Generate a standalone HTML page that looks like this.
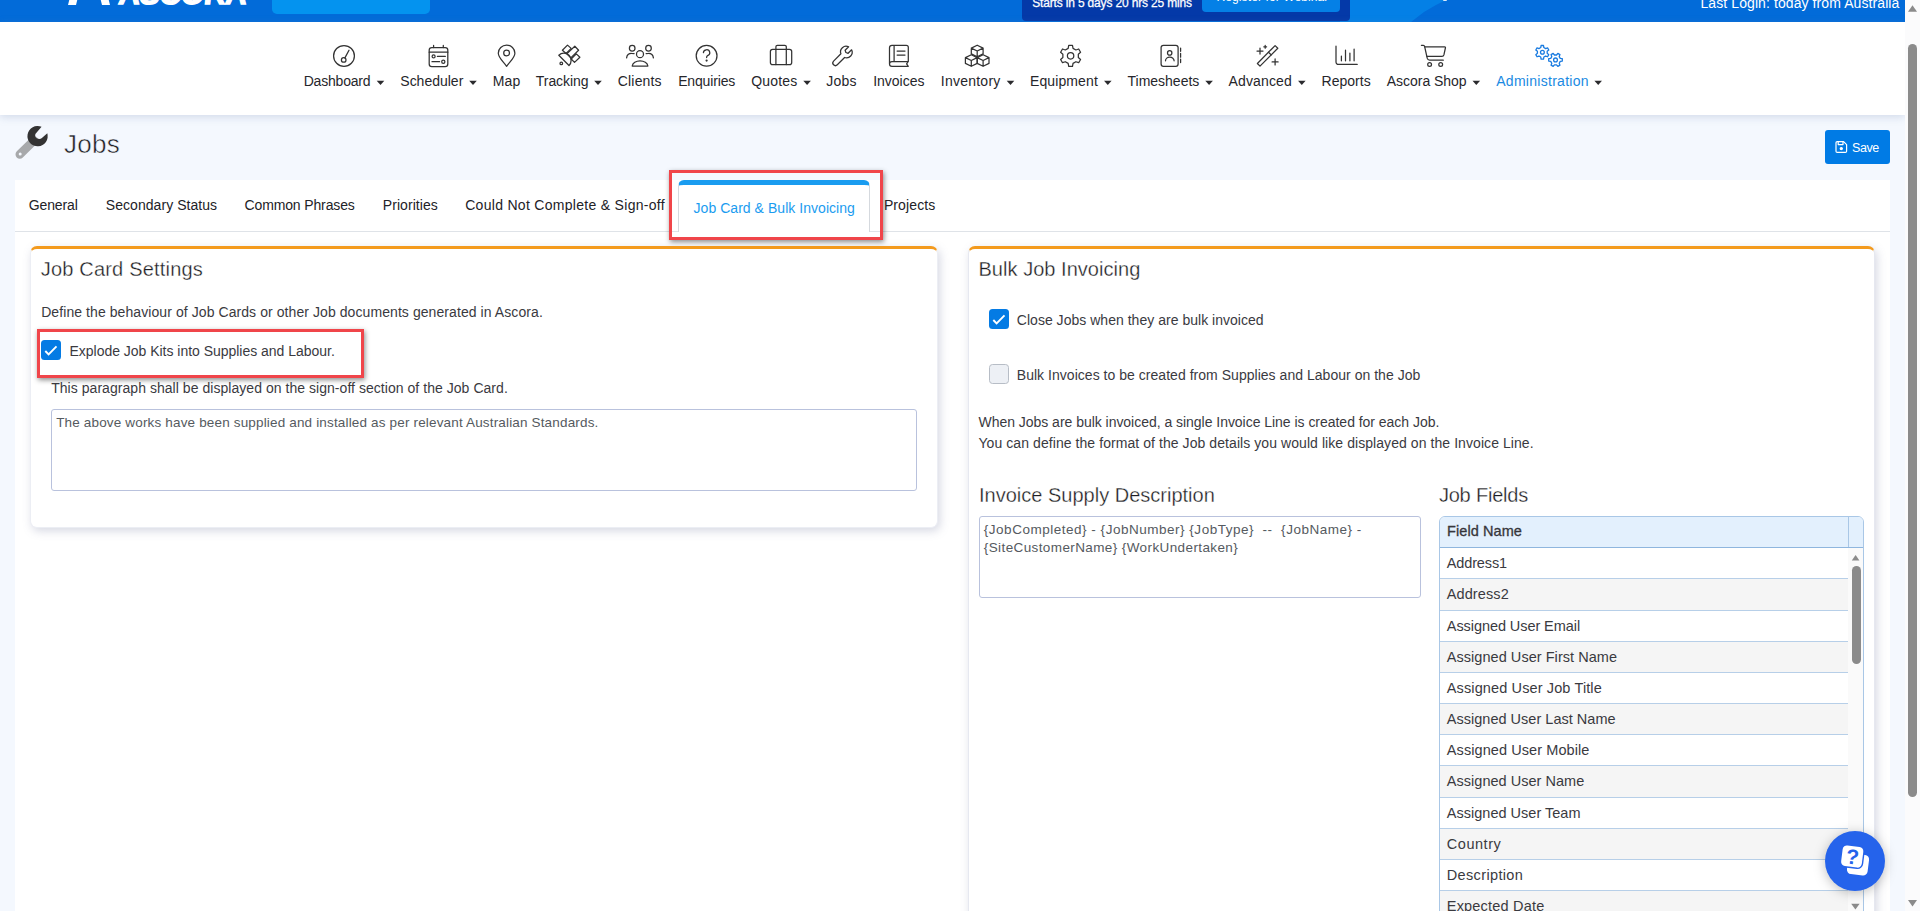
<!DOCTYPE html>
<html lang="en"><head><meta charset="utf-8"><title>Ascora - Jobs Administration</title>
<style>
html,body{margin:0;padding:0;}
body{width:1920px;height:911px;overflow:hidden;position:relative;background:#f4f8fe;font-family:"Liberation Sans",sans-serif;}
.t{position:absolute;white-space:pre;line-height:normal;font-family:"Liberation Sans",sans-serif;}
.b{position:absolute;box-sizing:border-box;}
svg{position:absolute;overflow:visible;}
.ic{fill:none;stroke:#333;stroke-width:1.25;stroke-linecap:round;stroke-linejoin:round;}

</style></head>
<body>
<!-- top blue bar -->
<div class="b" style="left:0;top:0;width:1905px;height:22px;background:#026bd9;overflow:hidden;">
  <div class="b" style="left:1340px;top:0;width:110px;height:22px;background:#0480e6;clip-path:polygon(0 0,106px 0,96px 5px,84px 12px,71px 22px,0 22px);"></div>
  <div class="b" style="left:272px;top:-10px;width:158px;height:24px;border-radius:5px;background:#0493ef;"></div>
  <div class="b" style="left:1022px;top:-10px;width:328px;height:31px;border-radius:0 0 4px 4px;background:#0439a8;"></div>
  <div class="b" style="left:1202px;top:-10px;width:138px;height:22px;border-radius:4px;background:#0480e6;"></div>
</div>
<span class="t" style="left:116.5px;top:-22.6px;font-size:30px;font-weight:700;color:#fff;letter-spacing:-0.3px;-webkit-text-stroke:1.3px #fff;transform:skewX(-6deg);transform-origin:0 100%;">ASCORA</span>
<div class="b" style="left:69px;top:-3.5px;width:8px;height:8px;background:#fff;transform:skewX(-14deg);"></div>
<div class="b" style="left:101px;top:-3.5px;width:8px;height:8px;background:#fff;transform:skewX(14deg);"></div>
<div class="b" style="left:1443px;top:-1px;width:4px;height:2.4px;border-radius:1px;background:#fff;opacity:.85;"></div>
<!-- nav -->
<div class="b" style="left:0;top:22px;width:1905px;height:93px;background:#fff;box-shadow:0 2px 8px rgba(120,140,180,.28);"></div>
<!-- tabs container -->
<div class="b" style="left:15px;top:180px;width:1875px;height:740px;background:#fff;"></div>
<div class="b" style="left:15px;top:231px;width:1875px;height:1px;background:#dfe3e8;"></div>
<!-- active tab -->
<div class="b" style="left:678px;top:180px;width:192px;height:52px;background:#fff;border:1px solid #d5d9de;border-top:5px solid #1a9cf0;border-bottom:none;border-radius:6px 6px 0 0;"></div>
<!-- red highlight tab -->
<div class="b" style="left:669px;top:170px;width:214px;height:70px;border:3px solid #f0454a;box-shadow:1px 2px 5px rgba(0,0,0,.45);"></div>
<!-- save button -->
<div class="b" style="left:1825px;top:130px;width:65px;height:34px;border-radius:3px;background:#007be5;"></div>
<!-- left panel -->
<div class="b" style="left:30px;top:246px;width:908px;height:281.5px;background:#fff;border-radius:7px;border:1px solid #eceef4;border-top:3px solid #f39a1d;box-shadow:2px 3px 10px rgba(105,112,150,.27);"></div>
<div class="b" style="left:51px;top:409px;width:866px;height:82px;background:#fff;border:1px solid #b9c2dd;border-radius:3px;"></div>
<!-- red highlight checkbox -->
<div class="b" style="left:37px;top:329px;width:327px;height:49px;border:3px solid #f0454a;box-shadow:1px 2px 5px rgba(0,0,0,.45);"></div>
<!-- right panel -->
<div class="b" style="left:968px;top:246px;width:907px;height:700px;background:#fff;border-radius:7px;border:1px solid #e6e8f0;border-top:3px solid #f39a1d;box-shadow:2px 3px 10px rgba(105,112,150,.27);"></div>
<div class="b" style="left:979px;top:516px;width:442px;height:82px;background:#fff;border:1px solid #b9c2dd;border-radius:3px;"></div>
<!-- checkboxes -->
<div class="b cb" style="left:41px;top:340px;width:20px;height:20px;border-radius:3.5px;background:#047be4;"></div>
<div class="b cb" style="left:989px;top:309px;width:20px;height:20px;border-radius:3.5px;background:#047be4;"></div>
<div class="b" style="left:989px;top:364px;width:20px;height:20px;border-radius:3.5px;background:#edf0f5;border:1px solid #b7bdc6;"></div>
<!-- table -->
<div class="b" style="left:1439px;top:516px;width:425px;height:420px;border:1px solid #a9c7e6;border-radius:6px 6px 0 0;background:#fafafa;overflow:hidden;">
  <div class="b" style="left:0;top:0;width:423px;height:30px;background:#e3f0fd;"></div>
  <div class="b" style="left:0;top:30px;width:423px;height:1px;background:#8fb6de;"></div>
  <div class="b" style="left:408px;top:0;width:1px;height:30px;background:#a9c7e6;"></div>
  <div class="b" style="left:0;top:31px;width:408px;height:30px;background:#fff;"></div>
  <div class="b" style="left:0;top:61px;width:408px;height:1px;background:#b7cfe8;"></div>
  <div class="b" style="left:0;top:62px;width:408px;height:31px;background:#f5f5f5;"></div>
  <div class="b" style="left:0;top:93px;width:408px;height:1px;background:#b7cfe8;"></div>
  <div class="b" style="left:0;top:94px;width:408px;height:30px;background:#fff;"></div>
  <div class="b" style="left:0;top:124px;width:408px;height:1px;background:#b7cfe8;"></div>
  <div class="b" style="left:0;top:125px;width:408px;height:30px;background:#f5f5f5;"></div>
  <div class="b" style="left:0;top:155px;width:408px;height:1px;background:#b7cfe8;"></div>
  <div class="b" style="left:0;top:156px;width:408px;height:30px;background:#fff;"></div>
  <div class="b" style="left:0;top:186px;width:408px;height:1px;background:#b7cfe8;"></div>
  <div class="b" style="left:0;top:187px;width:408px;height:30px;background:#f5f5f5;"></div>
  <div class="b" style="left:0;top:217px;width:408px;height:1px;background:#b7cfe8;"></div>
  <div class="b" style="left:0;top:218px;width:408px;height:30px;background:#fff;"></div>
  <div class="b" style="left:0;top:248px;width:408px;height:1px;background:#b7cfe8;"></div>
  <div class="b" style="left:0;top:249px;width:408px;height:31px;background:#f5f5f5;"></div>
  <div class="b" style="left:0;top:280px;width:408px;height:1px;background:#b7cfe8;"></div>
  <div class="b" style="left:0;top:281px;width:408px;height:30px;background:#fff;"></div>
  <div class="b" style="left:0;top:311px;width:408px;height:1px;background:#b7cfe8;"></div>
  <div class="b" style="left:0;top:312px;width:408px;height:30px;background:#f5f5f5;"></div>
  <div class="b" style="left:0;top:342px;width:408px;height:1px;background:#b7cfe8;"></div>
  <div class="b" style="left:0;top:343px;width:408px;height:30px;background:#fff;"></div>
  <div class="b" style="left:0;top:373px;width:408px;height:1px;background:#b7cfe8;"></div>
  <div class="b" style="left:0;top:374px;width:408px;height:30px;background:#f5f5f5;"></div>
  <div class="b" style="left:0;top:404px;width:408px;height:1px;background:#b7cfe8;"></div>
  <div class="b" style="left:411.5px;top:49px;width:9px;height:98px;border-radius:5px;background:#8b8b8b;"></div>
</div>
<!-- page scrollbar -->
<div class="b" style="left:1905px;top:0;width:15px;height:911px;background:#fbfbfc;"></div>
<div class="b" style="left:1908px;top:44px;width:9px;height:753px;border-radius:5px;background:#8b8b8b;"></div>

<svg width="1920" height="120" viewBox="0 0 1920 120" style="left:0;top:0;"><path d="M376.7 80.8H384.3L380.5 85.1Z" fill="#2b2b2e"/><path d="M469.2 80.8H476.8L473.0 85.1Z" fill="#2b2b2e"/><path d="M594.2 80.8H601.8L598.0 85.1Z" fill="#2b2b2e"/><path d="M803.3 80.8H810.9L807.1 85.1Z" fill="#2b2b2e"/><path d="M1006.7 80.8H1014.3L1010.5 85.1Z" fill="#2b2b2e"/><path d="M1104.0 80.8H1111.6L1107.8 85.1Z" fill="#2b2b2e"/><path d="M1205.3 80.8H1212.9L1209.1 85.1Z" fill="#2b2b2e"/><path d="M1298.0 80.8H1305.6L1301.8 85.1Z" fill="#2b2b2e"/><path d="M1472.5 80.8H1480.1L1476.3 85.1Z" fill="#2b2b2e"/><path d="M1594.4 80.8H1602.0L1598.2 85.1Z" fill="#2b2b2e"/></svg>
<svg class="ov" width="1920" height="911" viewBox="0 0 1920 911" style="left:0;top:0;">
<g class="ic">
<circle cx="344" cy="55.9" r="10.4"/><circle cx="343.7" cy="59.9" r="2.3"/><path d="M344.9 57.9 L349 50.2"/>
<rect x="429.2" y="47.5" width="18.6" height="19" rx="2.6"/><path d="M433.6 45.4V47.5M443.3 45.4V47.5M429.2 52.2H447.8"/>
<circle cx="433.6" cy="56.4" r="1.5"/><path d="M437.4 56.4H445.3M432 61.7H439.6"/><circle cx="443.3" cy="61.7" r="1.6"/>
<path d="M506.6 66.3 C503.5 62 498.3 57.5 498.3 53.2 A8.3 8.1 0 0 1 514.9 53.2 C514.9 57.5 509.7 62 506.6 66.3Z"/><circle cx="506.6" cy="52.9" r="2.9"/>
<path d="M567.5 45.1 L571.2 48.4 L566.1 53.5 L562.4 50.2Z"/>
<path d="M574.8 46.2 L578.6 50.2 L570.8 57.9 L566.8 53.9Z"/>
<path d="M576.3 53.9 L579.9 57.2 L574.5 62.4 L571.2 59Z"/>
<path d="M558.8 55.3 L569 65.5 A7.2 7.2 0 0 0 558.8 55.3Z"/>
<circle cx="561.3" cy="63.4" r="1.3"/>
<circle cx="632.2" cy="48.2" r="2.8"/><circle cx="648.5" cy="48.2" r="2.8"/><circle cx="640" cy="54.2" r="3.5"/>
<path d="M626.6 57.9 A5 5 0 0 1 631.6 53.5 H634.1"/><path d="M653.4 57.9 A5 5 0 0 0 648.4 53.5 H646.1"/>
<path d="M632.2 66 A7.9 5.8 0 0 1 647.9 66Z"/>
<circle cx="706.6" cy="55.8" r="10.4"/>
<path d="M703.4 52.6 A3.2 3 0 1 1 707.6 55.6 Q706.6 56.1 706.6 57.6"/><circle cx="706.6" cy="60.6" r="0.5" style="fill:#333"/>
<rect x="770.4" y="49.3" width="21.3" height="15.3" rx="2.2"/><path d="M775.9 64.6V46.8A1.5 1.5 0 0 1 777.4 45.3H784.8A1.5 1.5 0 0 1 786.3 46.8V64.6"/>
<path d="M848.6 45.6 A5.6 5.6 0 0 0 840.9 52.6 L833.6 59.9 A2.6 2.6 0 0 0 837.3 63.6 L844.6 56.3 A5.6 5.6 0 0 0 851.6 48.6 L848.1 52.1 L845.9 51.3 L845.1 49.1 Z" transform="translate(0,1.2)"/>
<path d="M908.3 61.5V47.3A2 2 0 0 0 906.3 45.3H892A2.5 2.5 0 0 0 889.5 47.8V63.9A2.4 2.4 0 0 0 891.9 66.3H908.3M889.5 63.9A2.4 2.4 0 0 1 891.9 61.5H908.3L906.6 63.9L908.3 66.3M894.1 45.3V61.5M897.1 51H905M897.1 55.1H905"/>
<path d="M977.2 45.2 L983.1 48.1 L983.1 53.9 L977.2 56.8 L971.3 53.9 L971.3 48.1Z M971.3 48.1 L977.2 51.0 L983.1 48.1 M977.2 51.0 V56.8"/>
<path d="M971.3 54.7 L977.2 57.6 L977.2 63.4 L971.3 66.3 L965.4 63.4 L965.4 57.6Z M965.4 57.6 L971.3 60.5 L977.2 57.6 M971.3 60.5 V66.3"/>
<path d="M983.1 54.7 L989.0 57.6 L989.0 63.4 L983.1 66.3 L977.2 63.4 L977.2 57.6Z M977.2 57.6 L983.1 60.5 L989.0 57.6 M983.1 60.5 V66.3"/>
<path d="M1068.16 48.34 L1068.72 45.42 L1072.48 45.42 L1073.04 48.34 L1075.89 49.98 L1078.70 49.01 L1080.57 52.26 L1078.33 54.21 L1078.33 57.49 L1080.57 59.44 L1078.70 62.69 L1075.89 61.72 L1073.04 63.36 L1072.48 66.28 L1068.72 66.28 L1068.16 63.36 L1065.31 61.72 L1062.50 62.69 L1060.63 59.44 L1062.87 57.49 L1062.87 54.21 L1060.63 52.26 L1062.50 49.01 L1065.31 49.98Z" style="stroke-linejoin:round"/><circle cx="1070.6" cy="55.85" r="3.2"/>
<rect x="1161.1" y="45.3" width="17" height="21" rx="2.3"/><circle cx="1169.7" cy="52.9" r="2.2"/><path d="M1165.5 60.8A4.3 3.6 0 0 1 1174.1 60.8"/>
<path d="M1180.6 48V51.3M1180.6 53.4V57.2M1180.6 59.2V62.6"/>
<path d="M1257.4 63.5 L1275.1 45.6 L1277.8 48.2 L1260 66.1Z"/><path d="M1268.5 52.2L1271.2 54.9"/>
<path d="M1257 51.1H1263M1260 48.1V54.1M1272.1 61.9H1278.1M1275.1 58.9V64.9" /><path d="M1263.8 46.8H1266.6M1265.2 45.4V48.2"/>
<path d="M1336 46.2V62A2.4 2.4 0 0 0 1338.4 64.4H1357.2M1341.4 56V60.8M1345.5 50.2V60.8M1349.9 53.1V60.8M1354.1 49.1V60.8"/>
<path d="M1421.4 45.3H1423.4Q1424.4 45.3 1424.6 46.3L1427.2 58.2Q1427.7 60.2 1429.6 60.2H1443.3"/><path d="M1425 46.9H1444.6Q1445.7 46.9 1445.4 48L1443.9 54.9Q1443.5 56.4 1442 56.4H1427"/>
<circle cx="1429.6" cy="64.4" r="1.9"/><circle cx="1440.7" cy="64.4" r="1.9"/>
</g>
<g class="ic" style="stroke:#1a7be0;stroke-width:1.3">
<path d="M1540.75 47.54 L1541.08 45.51 L1543.52 45.51 L1543.85 47.54 L1545.65 48.58 L1547.57 47.85 L1548.79 49.96 L1547.19 51.26 L1547.19 53.34 L1548.79 54.64 L1547.57 56.75 L1545.65 56.02 L1543.85 57.06 L1543.52 59.09 L1541.08 59.09 L1540.75 57.06 L1538.95 56.02 L1537.03 56.75 L1535.81 54.64 L1537.41 53.34 L1537.41 51.26 L1535.81 49.96 L1537.03 47.85 L1538.95 48.58Z"/><circle cx="1542.4" cy="52.3" r="1.9"/>
<path d="M1560.26 58.35 L1562.29 58.68 L1562.29 61.12 L1560.26 61.45 L1559.22 63.25 L1559.95 65.17 L1557.84 66.39 L1556.54 64.79 L1554.46 64.79 L1553.16 66.39 L1551.05 65.17 L1551.78 63.25 L1550.74 61.45 L1548.71 61.12 L1548.71 58.68 L1550.74 58.35 L1551.78 56.55 L1551.05 54.63 L1553.16 53.41 L1554.46 55.01 L1556.54 55.01 L1557.84 53.41 L1559.95 54.63 L1559.22 56.55Z"/><circle cx="1555.5" cy="59.9" r="1.9"/>
</g>
<path d="M34 140.5 L19.8 154.4" style="stroke:#a7a9ab;stroke-width:8.6;stroke-linecap:round;fill:none"/>
<circle cx="20.2" cy="153.9" r="1.5" fill="#f4f8fe"/>
<path d="M41.56 126.8 A10.15 10.15 0 1 0 47.3 133.2 L41.9 138 C39.6 140 34 138.6 35.4 134 Z" fill="#333"/>
<path d="M45.3 351 L48.6 354.5 L56.5 346.4" style="fill:none;stroke:#fff;stroke-width:1.9;stroke-linecap:butt;stroke-linejoin:miter"/>
<path d="M993.3 320 L996.6 323.5 L1004.5 315.4" style="fill:none;stroke:#fff;stroke-width:1.9;stroke-linecap:butt;stroke-linejoin:miter"/>
<g style="fill:none;stroke:#fff;stroke-width:1.2;stroke-linejoin:round">
<path d="M1836 142.8A1.2 1.2 0 0 1 1837.2 141.6H1843.6L1846.6 144.6V151.2A1.2 1.2 0 0 1 1845.4 152.4H1837.2A1.2 1.2 0 0 1 1836 151.2Z"/>
<path d="M1838.2 141.6V144.6H1843V141.6"/><circle cx="1841.3" cy="148.6" r="1.1" fill="#fff"/>
</g>
<path d="M1851.8 560.5 L1855.6 555 L1859.4 560.5Z" fill="#8b8b8b"/>
<path d="M1851.2 903.8 L1859.6 903.8 L1855.4 909.6Z" fill="#8b8b8b"/>
<path d="M1908 11.8 L1912.5 5.2 L1917 11.8Z" fill="#8b8b8b"/>
<path d="M1908 900 L1917 900 L1912.5 906.6Z" fill="#8b8b8b"/>
<circle cx="1855" cy="861" r="30" fill="#2563eb" style="filter:drop-shadow(0 2px 6px rgba(0,0,0,.25))"/>
<g transform="translate(1855 861)">
<rect x="-7" y="-7.3" width="20.8" height="20.8" rx="4.5" fill="#fff" transform="rotate(7)"/>
<rect x="-15.1" y="-15.9" width="23.6" height="23.6" rx="5.6" fill="#2563eb" transform="rotate(7)"/>
<rect x="-13.7" y="-14.5" width="20.8" height="20.8" rx="4.3" fill="#fff" transform="rotate(7)"/>
</g>
</svg>
<span class="t" style="left:1032.2px;top:-4.0px;font-size:12px;color:#fff;letter-spacing:-0.162px;-webkit-text-stroke:0.25px #fff;">Starts in 5 days 20 hrs 25 mins</span>
<span class="t" style="left:1216.5px;top:-10.0px;font-size:12px;color:#fff;letter-spacing:0.104px;">Register for Webinar</span>
<span class="t" style="left:1700.5px;top:-5.0px;font-size:14px;color:#fff;letter-spacing:0.087px;">Last Login: today from Australia</span>
<span class="t" style="left:303.7px;top:73.0px;font-size:14px;color:#26262b;letter-spacing:-0.200px;">Dashboard</span>
<span class="t" style="left:400.3px;top:73.0px;font-size:14px;color:#26262b;letter-spacing:-0.006px;">Scheduler</span>
<span class="t" style="left:492.8px;top:73.0px;font-size:14px;color:#26262b;letter-spacing:0.133px;">Map</span>
<span class="t" style="left:535.8px;top:73.0px;font-size:14px;color:#26262b;letter-spacing:-0.053px;">Tracking</span>
<span class="t" style="left:617.8px;top:73.0px;font-size:14px;color:#26262b;letter-spacing:0.167px;">Clients</span>
<span class="t" style="left:678.2px;top:73.0px;font-size:14px;color:#26262b;letter-spacing:-0.159px;">Enquiries</span>
<span class="t" style="left:751.2px;top:73.0px;font-size:14px;color:#26262b;letter-spacing:0.192px;">Quotes</span>
<span class="t" style="left:826.2px;top:73.0px;font-size:14px;color:#26262b;letter-spacing:0.274px;">Jobs</span>
<span class="t" style="left:873.2px;top:73.0px;font-size:14px;color:#26262b;letter-spacing:-0.008px;">Invoices</span>
<span class="t" style="left:940.8px;top:73.0px;font-size:14px;color:#26262b;letter-spacing:0.238px;">Inventory</span>
<span class="t" style="left:1030.0px;top:73.0px;font-size:14px;color:#26262b;letter-spacing:0.108px;">Equipment</span>
<span class="t" style="left:1127.5px;top:73.0px;font-size:14px;color:#26262b;letter-spacing:-0.005px;">Timesheets</span>
<span class="t" style="left:1228.5px;top:73.0px;font-size:14px;color:#26262b;letter-spacing:0.146px;">Advanced</span>
<span class="t" style="left:1321.5px;top:73.0px;font-size:14px;color:#26262b;letter-spacing:0.028px;">Reports</span>
<span class="t" style="left:1386.8px;top:73.0px;font-size:14px;color:#26262b;letter-spacing:-0.037px;">Ascora Shop</span>
<span class="t" style="left:1496.2px;top:73.0px;font-size:14px;color:#1a8ae2;letter-spacing:0.284px;">Administration</span>
<span class="t" style="left:64.0px;top:129.0px;font-size:26px;color:#1e1e24;letter-spacing:0.293px;-webkit-text-stroke:0.5px #f4f8fe;">Jobs</span>
<span class="t" style="left:28.8px;top:197.0px;font-size:14px;color:#222227;letter-spacing:-0.135px;">General</span>
<span class="t" style="left:105.8px;top:197.0px;font-size:14px;color:#222227;letter-spacing:0.052px;">Secondary Status</span>
<span class="t" style="left:244.5px;top:197.0px;font-size:14px;color:#222227;letter-spacing:-0.134px;">Common Phrases</span>
<span class="t" style="left:382.8px;top:197.0px;font-size:14px;color:#222227;letter-spacing:0.059px;">Priorities</span>
<span class="t" style="left:465.2px;top:197.0px;font-size:14px;color:#222227;letter-spacing:0.297px;">Could Not Complete &amp; Sign-off</span>
<span class="t" style="left:693.5px;top:200.0px;font-size:14px;color:#1a9cf0;letter-spacing:0.045px;">Job Card &amp; Bulk Invoicing</span>
<span class="t" style="left:883.9px;top:197.0px;font-size:14px;color:#222227;letter-spacing:0.117px;">Projects</span>
<span class="t" style="left:1852.0px;top:141.0px;font-size:12.5px;color:#fff;letter-spacing:-0.400px;">Save</span>
<span class="t" style="left:40.7px;top:258.0px;font-size:20px;color:#1e1e24;letter-spacing:0.195px;-webkit-text-stroke:0.3px #fff;">Job Card Settings</span>
<span class="t" style="left:41.2px;top:304.0px;font-size:14px;color:#3a3a3f;letter-spacing:0.077px;">Define the behaviour of Job Cards or other Job documents generated in Ascora.</span>
<span class="t" style="left:69.5px;top:343.0px;font-size:14px;color:#3a3a3f;letter-spacing:-0.022px;">Explode Job Kits into Supplies and Labour.</span>
<span class="t" style="left:51.2px;top:380.0px;font-size:14px;color:#3a3a3f;letter-spacing:0.043px;">This paragraph shall be displayed on the sign-off section of the Job Card.</span>
<span class="t" style="left:56.2px;top:415.0px;font-size:13.5px;color:#555a60;letter-spacing:0.162px;">The above works have been supplied and installed as per relevant Australian Standards.</span>
<span class="t" style="left:978.5px;top:258.0px;font-size:20px;color:#1e1e24;letter-spacing:0.035px;-webkit-text-stroke:0.3px #fff;">Bulk Job Invoicing</span>
<span class="t" style="left:1016.8px;top:312.0px;font-size:14px;color:#3a3a3f;letter-spacing:0.024px;">Close Jobs when they are bulk invoiced</span>
<span class="t" style="left:1016.8px;top:367.0px;font-size:14px;color:#3a3a3f;letter-spacing:0.031px;">Bulk Invoices to be created from Supplies and Labour on the Job</span>
<span class="t" style="left:978.5px;top:414.0px;font-size:14px;color:#3a3a3f;letter-spacing:-0.030px;">When Jobs are bulk invoiced, a single Invoice Line is created for each Job.</span>
<span class="t" style="left:978.5px;top:435.0px;font-size:14px;color:#3a3a3f;letter-spacing:0.069px;">You can define the format of the Job details you would like displayed on the Invoice Line.</span>
<span class="t" style="left:979.0px;top:484.0px;font-size:20px;color:#1e1e24;letter-spacing:0.005px;-webkit-text-stroke:0.3px #fff;">Invoice Supply Description</span>
<span class="t" style="left:983.8px;top:522.0px;font-size:13.5px;color:#555a60;letter-spacing:0.515px;white-space:pre;">{JobCompleted} - {JobNumber} {JobType}  --  {JobName} -</span>
<span class="t" style="left:983.8px;top:540.0px;font-size:13.5px;color:#555a60;letter-spacing:0.393px;">{SiteCustomerName} {WorkUndertaken}</span>
<span class="t" style="left:1438.9px;top:484.0px;font-size:20px;color:#1e1e24;letter-spacing:-0.195px;-webkit-text-stroke:0.3px #fff;">Job Fields</span>
<span class="t" style="left:1447.0px;top:523.0px;font-size:14.5px;color:#3a3a3f;letter-spacing:0.084px;-webkit-text-stroke:0.3px #2f2f33;">Field Name</span>
<span class="t" style="left:1446.8px;top:555.0px;font-size:14.5px;color:#3a3a3f;letter-spacing:-0.138px;">Address1</span>
<span class="t" style="left:1446.8px;top:586.0px;font-size:14.5px;color:#3a3a3f;letter-spacing:0.091px;">Address2</span>
<span class="t" style="left:1446.8px;top:618.0px;font-size:14.5px;color:#3a3a3f;letter-spacing:-0.071px;">Assigned User Email</span>
<span class="t" style="left:1446.8px;top:649.0px;font-size:14.5px;color:#3a3a3f;letter-spacing:0.043px;">Assigned User First Name</span>
<span class="t" style="left:1446.8px;top:680.0px;font-size:14.5px;color:#3a3a3f;letter-spacing:0.121px;">Assigned User Job Title</span>
<span class="t" style="left:1446.8px;top:711.0px;font-size:14.5px;color:#3a3a3f;letter-spacing:0.016px;">Assigned User Last Name</span>
<span class="t" style="left:1446.8px;top:742.0px;font-size:14.5px;color:#3a3a3f;letter-spacing:0.082px;">Assigned User Mobile</span>
<span class="t" style="left:1446.8px;top:773.0px;font-size:14.5px;color:#3a3a3f;letter-spacing:0.029px;">Assigned User Name</span>
<span class="t" style="left:1446.8px;top:805.0px;font-size:14.5px;color:#3a3a3f;letter-spacing:0.010px;">Assigned User Team</span>
<span class="t" style="left:1446.8px;top:836.0px;font-size:14.5px;color:#3a3a3f;letter-spacing:0.536px;">Country</span>
<span class="t" style="left:1446.8px;top:867.0px;font-size:14.5px;color:#3a3a3f;letter-spacing:0.347px;">Description</span>
<span class="t" style="left:1446.8px;top:898.0px;font-size:14.5px;color:#3a3a3f;letter-spacing:0.190px;">Expected Date</span>
<span class="t" style="left:1845.5px;top:845.0px;font-size:21px;color:#2563eb;font-weight:700;letter-spacing:-1.028px;transform:rotate(7deg);">?</span>

</body></html>
